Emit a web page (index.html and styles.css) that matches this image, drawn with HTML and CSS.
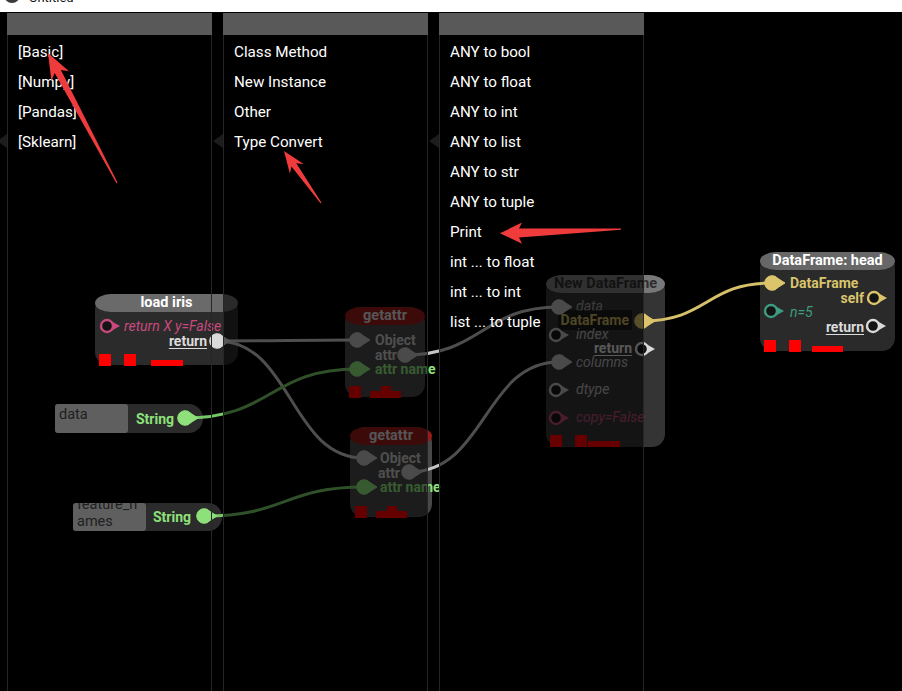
FILE: index.html
```html
<!DOCTYPE html>
<html>
<head>
<meta charset="utf-8">
<title>Untitled</title>
<link rel="stylesheet" href="styles.css">
</head>
<body>
<div class="screen">
  <div class="titlebar">
    <div class="title-inner"><span class="app-icon"></span><span class="title-text">Untitled</span></div>
  </div>

  <div class="graph">
    <div class="node n-iris">
      <div class="nhead">load iris</div>
      <div class="nrows">
        <div class="row r-in t-pink it">return X y=False</div>
        <div class="row r-out t-ret">return</div>
      </div>
      <div class="marks"><i class="sq"></i><i class="sq"></i><i class="bar"></i></div>
    </div>

    <div class="node n-get n-get1">
      <div class="nhead">getattr</div>
      <div class="nrows">
        <div class="row r-in t-gb">Object</div>
        <div class="row r-out t-gb">attr</div>
        <div class="row r-in t-green">attr name</div>
      </div>
      <div class="marks"><i class="sq"></i><span class="stack"><i class="nub"></i><i class="bar"></i></span></div>
    </div>

    <div class="node n-get n-get2">
      <div class="nhead">getattr</div>
      <div class="nrows">
        <div class="row r-in t-gb">Object</div>
        <div class="row r-out t-gb">attr</div>
        <div class="row r-in t-green">attr name</div>
      </div>
      <div class="marks"><i class="sq"></i><span class="stack"><i class="nub"></i><i class="bar"></i></span></div>
    </div>

    <div class="node n-new">
      <div class="nhead">New DataFrame</div>
      <div class="nrows">
        <div class="row r-in it t-dg">data</div>
        <div class="row r-out t-yel"><span class="lblbox">DataFrame</span></div>
        <div class="row r-in it t-g">index</div>
        <div class="row r-out t-ret">return</div>
        <div class="row r-in it t-g skip">columns</div>
        <div class="row r-in it t-g skip">dtype</div>
        <div class="row r-in it t-pinkd">copy=False</div>
      </div>
      <div class="marks"><i class="sq"></i><i class="sq"></i><i class="bar"></i></div>
    </div>

    <div class="node n-head">
      <div class="nhead">DataFrame: head</div>
      <div class="nrows">
        <div class="row r-in t-yel">DataFrame</div>
        <div class="row r-out t-yel">self</div>
        <div class="row r-in it t-teal">n=5</div>
        <div class="row r-out t-ret">return</div>
      </div>
      <div class="marks"><i class="sq"></i><i class="sq"></i><i class="bar"></i></div>
    </div>

    <div class="snode s-data"><div class="sbox"><span class="stext">data</span></div><span class="slabel">String</span></div>
    <div class="snode s-feat"><div class="sbox"><span class="stext">feature_names</span></div><span class="slabel">String</span></div>

    <svg class="wires" width="902" height="691" viewBox="0 0 902 691">
      <defs>
        <g id="pf"><circle r="7.3"/><polygon points="2,-7 13,0 2,7"/></g>
        <g id="po"><circle r="6" fill="#141414" stroke-width="2.4"/><polygon points="5,-4.5 13,0 5,4.5" stroke="none"/></g>
      </defs>
      <path class="w w-gray" d="M217,341 C287,341 287,340 357,340"/>
      <path class="w w-gray" d="M217,341 C292,341 290,458 364,458"/>
      <path class="w w-green" d="M185,418 C272,418 270,369 357,369"/>
      <path class="w w-green" d="M204,516 C286,516 284,487 364,487"/>
      <path class="w w-gray" d="M405,355 C482,355 482,307 559,307"/>
      <path class="w w-gray" d="M409,472 C486,472 484,362 559,362"/>
      <path class="w w-yel" d="M642,321 C708,321 706,283 772,283"/>

      <use href="#po" x="107" y="326" class="p-pink"/>
      <use href="#pf" x="217" y="341" class="p-white"/>

      <use href="#pf" x="357" y="340" class="p-gray"/>
      <use href="#pf" x="405" y="355" class="p-gray"/>
      <use href="#pf" x="357" y="369" class="p-green"/>

      <use href="#pf" x="364" y="458" class="p-gray"/>
      <use href="#pf" x="409" y="472" class="p-gray"/>
      <use href="#pf" x="364" y="487" class="p-green"/>

      <use href="#pf" x="559" y="307" class="p-gray"/>
      <use href="#po" x="556" y="335" class="p-gray"/>
      <use href="#pf" x="559" y="362" class="p-gray"/>
      <use href="#po" x="556" y="390" class="p-gray"/>
      <use href="#po" x="556" y="418" class="p-pinkd"/>
      <use href="#pf" x="642" y="321" class="p-yel"/>
      <use href="#po" x="642" y="349" class="p-white"/>

      <use href="#pf" x="772" y="283" class="p-yel"/>
      <use href="#po" x="874" y="298" class="p-yel"/>
      <use href="#po" x="771" y="311" class="p-teal"/>
      <use href="#po" x="873" y="326" class="p-white"/>

      <use href="#pf" x="185" y="418" class="p-green"/>
      <use href="#pf" x="204" y="516" class="p-green"/>
    </svg>
  </div>

  <div class="menus">
    <div class="col">
      <div class="col-head"></div>
      <ul class="items">
        <li>[Basic]</li>
        <li>[Numpy]</li>
        <li>[Pandas]</li>
        <li>[Sklearn]</li>
      </ul>
    </div>
    <div class="col col-dim">
      <div class="col-head"></div>
      <ul class="items">
        <li>Class Method</li>
        <li>New Instance</li>
        <li>Other</li>
        <li>Type Convert</li>
      </ul>
    </div>
    <div class="col col-dim">
      <div class="col-head"></div>
      <ul class="items">
        <li>ANY to bool</li>
        <li>ANY to float</li>
        <li>ANY to int</li>
        <li>ANY to list</li>
        <li>ANY to str</li>
        <li>ANY to tuple</li>
        <li>Print</li>
        <li>int ... to float</li>
        <li>int ... to int</li>
        <li>list ... to tuple</li>
      </ul>
    </div>
  </div>

  <svg class="annot" width="902" height="691" viewBox="0 0 902 691">
    <polygon class="arrow" points="117.6,182.7 60.9,69.9 69,71.3 48,53 51.4,80.7 54.7,73.1 116.4,183.3"/>
    <polygon class="arrow" points="321.5,202.7 296.3,163.2 303.7,164 284,151 289.9,173.8 291.5,166.6 320.5,203.3"/>
    <polygon class="arrow" points="621,228.4 519,228.6 522,222.5 500,233.3 522,243.8 519,237.6 621,229.8"/>
  </svg>
</div>
</body>
</html>
```

FILE: styles.css
```css
html, body {
  margin: 0;
  padding: 0;
  background: #000;
}

.screen {
  position: relative;
  width: 902px;
  height: 691px;
  overflow: hidden;
  background: #000;
  font-family: Roboto, "Noto Sans", sans-serif;
}

/* window title bar (mostly cropped) */
.titlebar {
  height: 12px;
  background: #fff;
  overflow: hidden;
}
.title-inner {
  display: flex;
  align-items: flex-end;
  gap: 9px;
  height: 16px;
  margin-top: -13px;
  padding-left: 4px;
}
.app-icon {
  width: 16px;
  height: 16px;
  border-radius: 50%;
  background: #3a3a3a;
  flex: none;
}
.title-text {
  font-size: 13px;
  line-height: 13px;
  color: #111;
  margin-bottom: -1px;
}

/* node canvas */
.graph {
  position: absolute;
  left: 0;
  top: 0;
  width: 902px;
  height: 691px;
  z-index: 0;
}
.wires {
  position: absolute;
  left: 0;
  top: 0;
}
.w {
  fill: none;
  stroke-width: 3;
}
.w-gray { stroke: #c4c4c4; }
.w-green { stroke: #76c867; }
.w-yel { stroke: #d6c16a; }

.p-pink { fill: #c9497f; stroke: #c9497f; }
.p-pinkd { fill: #b84a73; stroke: #b84a73; }
.p-white { fill: #dadada; stroke: #dadada; }
.p-gray { fill: #b8b8b8; stroke: #b8b8b8; }
.p-green { fill: #8de07a; stroke: #8de07a; }
.p-yel { fill: #dcc46c; stroke: #dcc46c; }
.p-teal { fill: #3e9c80; stroke: #3e9c80; }

.node {
  position: absolute;
  background: #2b2b2b;
  border-radius: 16px 16px 13px 13px;
  font-size: 14px;
  box-sizing: border-box;
}
.nhead {
  height: 18px;
  line-height: 18px;
  text-align: center;
  font-weight: 700;
  font-size: 14.5px;
  color: #fff;
  background: #6a6a6a;
  border-radius: 16px / 9px;
  white-space: nowrap;
  overflow: hidden;
}
.row {
  height: 15px;
  line-height: 15px;
  white-space: nowrap;
}
.r-out { text-align: right; }
.it { font-style: italic; }

.t-pink { color: #c9497f; }
.t-ret {
  color: #dcdcdc;
  font-weight: 700;
  text-decoration: underline;
  text-underline-offset: 2px;
}
.t-gb { color: #c4c4c4; font-weight: 700; }
.t-green { color: #8de07a; font-weight: 700; }
.t-yel { color: #d9c46c; font-weight: 700; }
.t-teal { color: #3e9c80; }
.t-dg { color: #9a9a9a; }
.t-g { color: #b0b0b0; }
.t-pinkd { color: #b84a73; }

.marks {
  display: flex;
  align-items: flex-end;
  height: 12px;
  padding-left: 4px;
}
.sq {
  width: 12px;
  height: 12px;
  background: #f00;
}
.sq + .sq { margin-left: 13px; }
.bar {
  width: 32px;
  height: 6px;
  background: #f00;
  margin-left: 15px;
}
.stack {
  display: flex;
  flex-direction: column;
  align-items: center;
  margin-left: 9px;
}
.nub {
  width: 10px;
  height: 5px;
  background: #f00;
}
.stack .bar {
  margin-left: 0;
  width: 31px;
  height: 7px;
}

/* load iris */
.n-iris {
  left: 95px;
  top: 294px;
  width: 143px;
  height: 71px;
}
.n-iris .nrows { padding-top: 6.5px; }
.n-iris .r-in { padding-left: 29px; }
.n-iris .r-out { padding-right: 31px; }
.n-iris .marks { margin-top: 5.5px; }

/* getattr */
.n-get {
  width: 80px;
  height: 90px;
  background: #474747;
}
.n-get .nhead {
  background: #9a1a1a;
  color: #d4d4d4;
}
.n-get .row { height: 14.5px; line-height: 14.5px; }
.n-get .r-in { padding-left: 30px; }
.n-get .r-out { padding-right: 28px; }
.n-get .nrows { padding-top: 8px; }
.n-get .marks { margin-top: 9.5px; }
.n-get1 { left: 345px; top: 307px; }
.n-get2 { left: 350px; top: 427px; width: 82px; }
.n-get2 .nrows { padding-top: 6px; }
.n-get2 .r-out { padding-right: 32px; }
.n-get2 .marks { padding-left: 5px; margin-top: 11px; }

/* New DataFrame */
.n-new {
  left: 546px;
  top: 275px;
  width: 119px;
  height: 172px;
  background: #343434;
}
.n-new .nhead {
  background: #787878;
  color: #2e2e2e;
}
.n-new .nrows { padding-top: 7px; }
.n-new .row { height: 13.9px; line-height: 13.9px; }
.n-new .row.skip { margin-bottom: 13.9px; }
.n-new .r-in { padding-left: 30px; }
.n-new .r-out { padding-right: 33px; }
.n-new .marks { margin-top: 10px; }
.n-new .bar { margin-left: 1px; }
.n-new .t-yel { color: #c4b05a; }
.lblbox {
  background: rgba(0, 0, 0, 0.5);
  padding: 2px 3px;
}

/* DataFrame: head */
.n-head {
  left: 760px;
  top: 252px;
  width: 135px;
  height: 99px;
  background: #2a2a2a;
}
.n-head .nhead { background: #676767; }
.n-head .nrows { padding-top: 6px; }
.n-head .row { height: 14.5px; line-height: 14.5px; }
.n-head .r-in { padding-left: 30px; }
.n-head .r-out { padding-right: 31px; }
.n-head .marks { margin-top: 6px; }
.n-head .bar { margin-left: 11px; width: 31px; }

/* String input nodes */
.snode {
  position: absolute;
  display: flex;
  align-items: center;
  background: #2b2b2b;
  border-radius: 3px 15px 15px 3px;
  box-sizing: border-box;
}
.s-data { left: 55px; top: 404px; width: 148px; height: 29px; }
.s-feat { left: 73px; top: 503px; width: 149px; height: 28px; }
.sbox {
  width: 73px;
  align-self: stretch;
  background: #5f5f5f;
  border-radius: 3px;
  overflow: hidden;
  padding-left: 4px;
  box-sizing: border-box;
  font-size: 14.5px;
  color: #202020;
}
.stext {
  display: block;
  line-height: 18px;
  margin-top: 2px;
}
.s-feat .stext {
  width: 62px;
  word-break: break-all;
  line-height: 17px;
  margin-top: -7.5px;
}
.slabel {
  margin-left: 8px;
  font-weight: 700;
  font-size: 14px;
  color: #8de07a;
}
.s-feat .slabel { margin-left: 7px; }

/* menu columns */
.menus {
  position: relative;
  z-index: 1;
  display: flex;
  gap: 11px;
  padding-left: 7px;
  height: 679px;
}
.col {
  position: relative;
  width: 205px;
  height: 678px;
  margin-top: 1px;
  border-left: 1px solid #262626;
  border-right: 1px solid #262626;
  box-sizing: border-box;
}
.col-dim { background: rgba(0, 0, 0, 0.6); }
.col::before {
  content: "";
  position: absolute;
  left: -11px;
  top: 121px;
  border-right: 10px solid #1c1c1c;
  border-top: 7px solid transparent;
  border-bottom: 7px solid transparent;
}
.col-head {
  height: 22px;
  margin: 0 -1px;
  background: #595959;
}
.items {
  list-style: none;
  margin: 0;
  padding: 2px 0 0 10px;
}
.items li {
  height: 30px;
  line-height: 30px;
  font-size: 15.2px;
  color: #fff;
  white-space: nowrap;
}

/* screenshot annotations */
.annot {
  position: absolute;
  left: 0;
  top: 0;
  z-index: 2;
  pointer-events: none;
}
.arrow { fill: #ef3b3b; }
```
